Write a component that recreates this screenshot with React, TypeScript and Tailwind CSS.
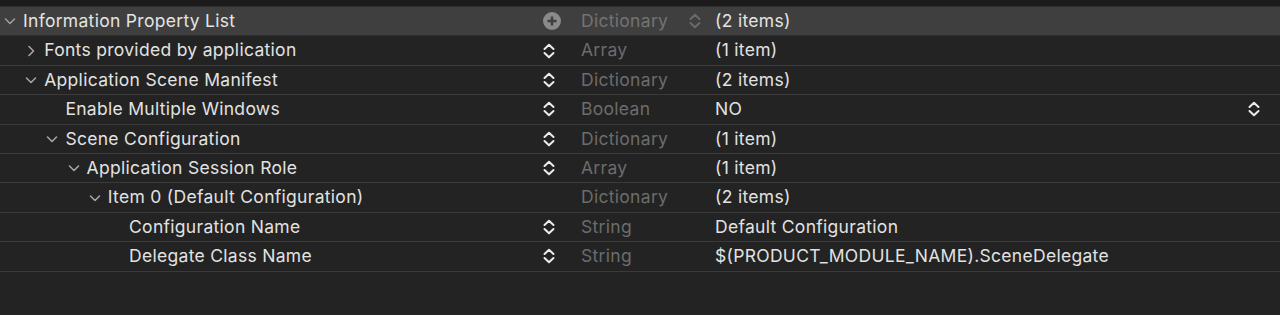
import React from "react";

type Row = {
  key: string;
  level: number;
  chevron?: "down" | "right";
  stepper: boolean;
  type: string;
  value: string;
  valueStepper?: boolean;
};

const rows: Row[] = [
  { key: "Fonts provided by application", level: 1, chevron: "right", stepper: true, type: "Array", value: "(1 item)" },
  { key: "Application Scene Manifest", level: 1, chevron: "down", stepper: true, type: "Dictionary", value: "(2 items)" },
  { key: "Enable Multiple Windows", level: 2, stepper: true, type: "Boolean", value: "NO", valueStepper: true },
  { key: "Scene Configuration", level: 2, chevron: "down", stepper: true, type: "Dictionary", value: "(1 item)" },
  { key: "Application Session Role", level: 3, chevron: "down", stepper: true, type: "Array", value: "(1 item)" },
  { key: "Item 0 (Default Configuration)", level: 4, chevron: "down", stepper: false, type: "Dictionary", value: "(2 items)" },
  { key: "Configuration Name", level: 5, stepper: true, type: "String", value: "Default Configuration" },
  { key: "Delegate Class Name", level: 5, stepper: true, type: "String", value: "$(PRODUCT_MODULE_NAME).SceneDelegate" },
];

const Chevron = ({ dir, className }: { dir: "down" | "right"; className?: string }) =>
  dir === "down" ? (
    <svg width="14" height="14" viewBox="0 0 14 14" className={className}>
      <path d="M2.5 5 L7 9.5 L11.5 5" fill="none" stroke="currentColor" strokeWidth="1.6" strokeLinecap="round" strokeLinejoin="round" />
    </svg>
  ) : (
    <svg width="14" height="14" viewBox="0 0 14 14" className={className}>
      <path d="M5 2.5 L9.5 7 L5 11.5" fill="none" stroke="currentColor" strokeWidth="1.6" strokeLinecap="round" strokeLinejoin="round" />
    </svg>
  );

const Stepper = ({ className }: { className?: string }) => (
  <svg width="14" height="18" viewBox="0 0 14 18" className={className}>
    <path d="M2.5 7 L7 2.8 L11.5 7" fill="none" stroke="currentColor" strokeWidth="2" strokeLinecap="round" strokeLinejoin="round" />
    <path d="M2.5 11 L7 15.2 L11.5 11" fill="none" stroke="currentColor" strokeWidth="2" strokeLinecap="round" strokeLinejoin="round" />
  </svg>
);

const PlusCircle = () => (
  <svg width="20" height="20" viewBox="0 0 20 20">
    <circle cx="10" cy="10" r="9" fill="#8a8a8a" />
    <path d="M10 5.5 V14.5 M5.5 10 H14.5" stroke="#3e3e3e" strokeWidth="2.4" />
  </svg>
);

export default function App() {
  return (
    <div
      className="w-[1280px] h-[315px] bg-[#232323] text-[17.5px] tracking-[0.3px] text-[#e2e2e2] overflow-hidden"
      style={{ fontFamily: "Inter, 'Noto Sans', sans-serif" }}
    >
      <div className="h-[7px] bg-[#1b1b1b] border-b border-[#2c2c2c]" />
      {/* root row */}
      <div className="flex items-center h-[29.4px] bg-[#3f3f3f] border-b border-[#2e2e2e]">
        <div className="w-[540px] flex items-center pl-[3px]">
          <Chevron dir="down" className="text-[#9c9c9c] mr-[6px]" />
          <span className="text-[#e4e4e4]">Information Property List</span>
        </div>
        <div className="w-[41px] flex items-center pl-[2px]">
          <PlusCircle />
        </div>
        <div className="w-[107px] text-[#737373]">Dictionary</div>
        <div className="w-[27px] flex items-center">
          <Stepper className="text-[#6a6a6a]" />
        </div>
        <div className="flex-1 text-[#e4e4e4]">(2 items)</div>
      </div>
      {rows.map((r) => (
        <div key={r.key} className="flex items-center h-[29.4px] border-b border-[#3a3a3a]">
          <div className="w-[540px] flex items-center" style={{ paddingLeft: 3 + 21.2 * r.level }}>
            {r.chevron ? (
              <Chevron dir={r.chevron} className="text-[#a4a4a4] mr-[6px]" />
            ) : (
              <span className="w-[20px]" />
            )}
            <span>{r.key}</span>
          </div>
          <div className="w-[41px] flex items-center pl-[2px]">
            {r.stepper && <Stepper className="text-[#ececec]" />}
          </div>
          <div className="w-[134px] text-[#6c6c6c]">{r.type}</div>
          <div className="flex-1 flex items-center pr-[19px]">
            <span className="flex-1">{r.value}</span>
            {r.valueStepper && <Stepper className="text-[#ececec]" />}
          </div>
        </div>
      ))}
    </div>
  );
}
